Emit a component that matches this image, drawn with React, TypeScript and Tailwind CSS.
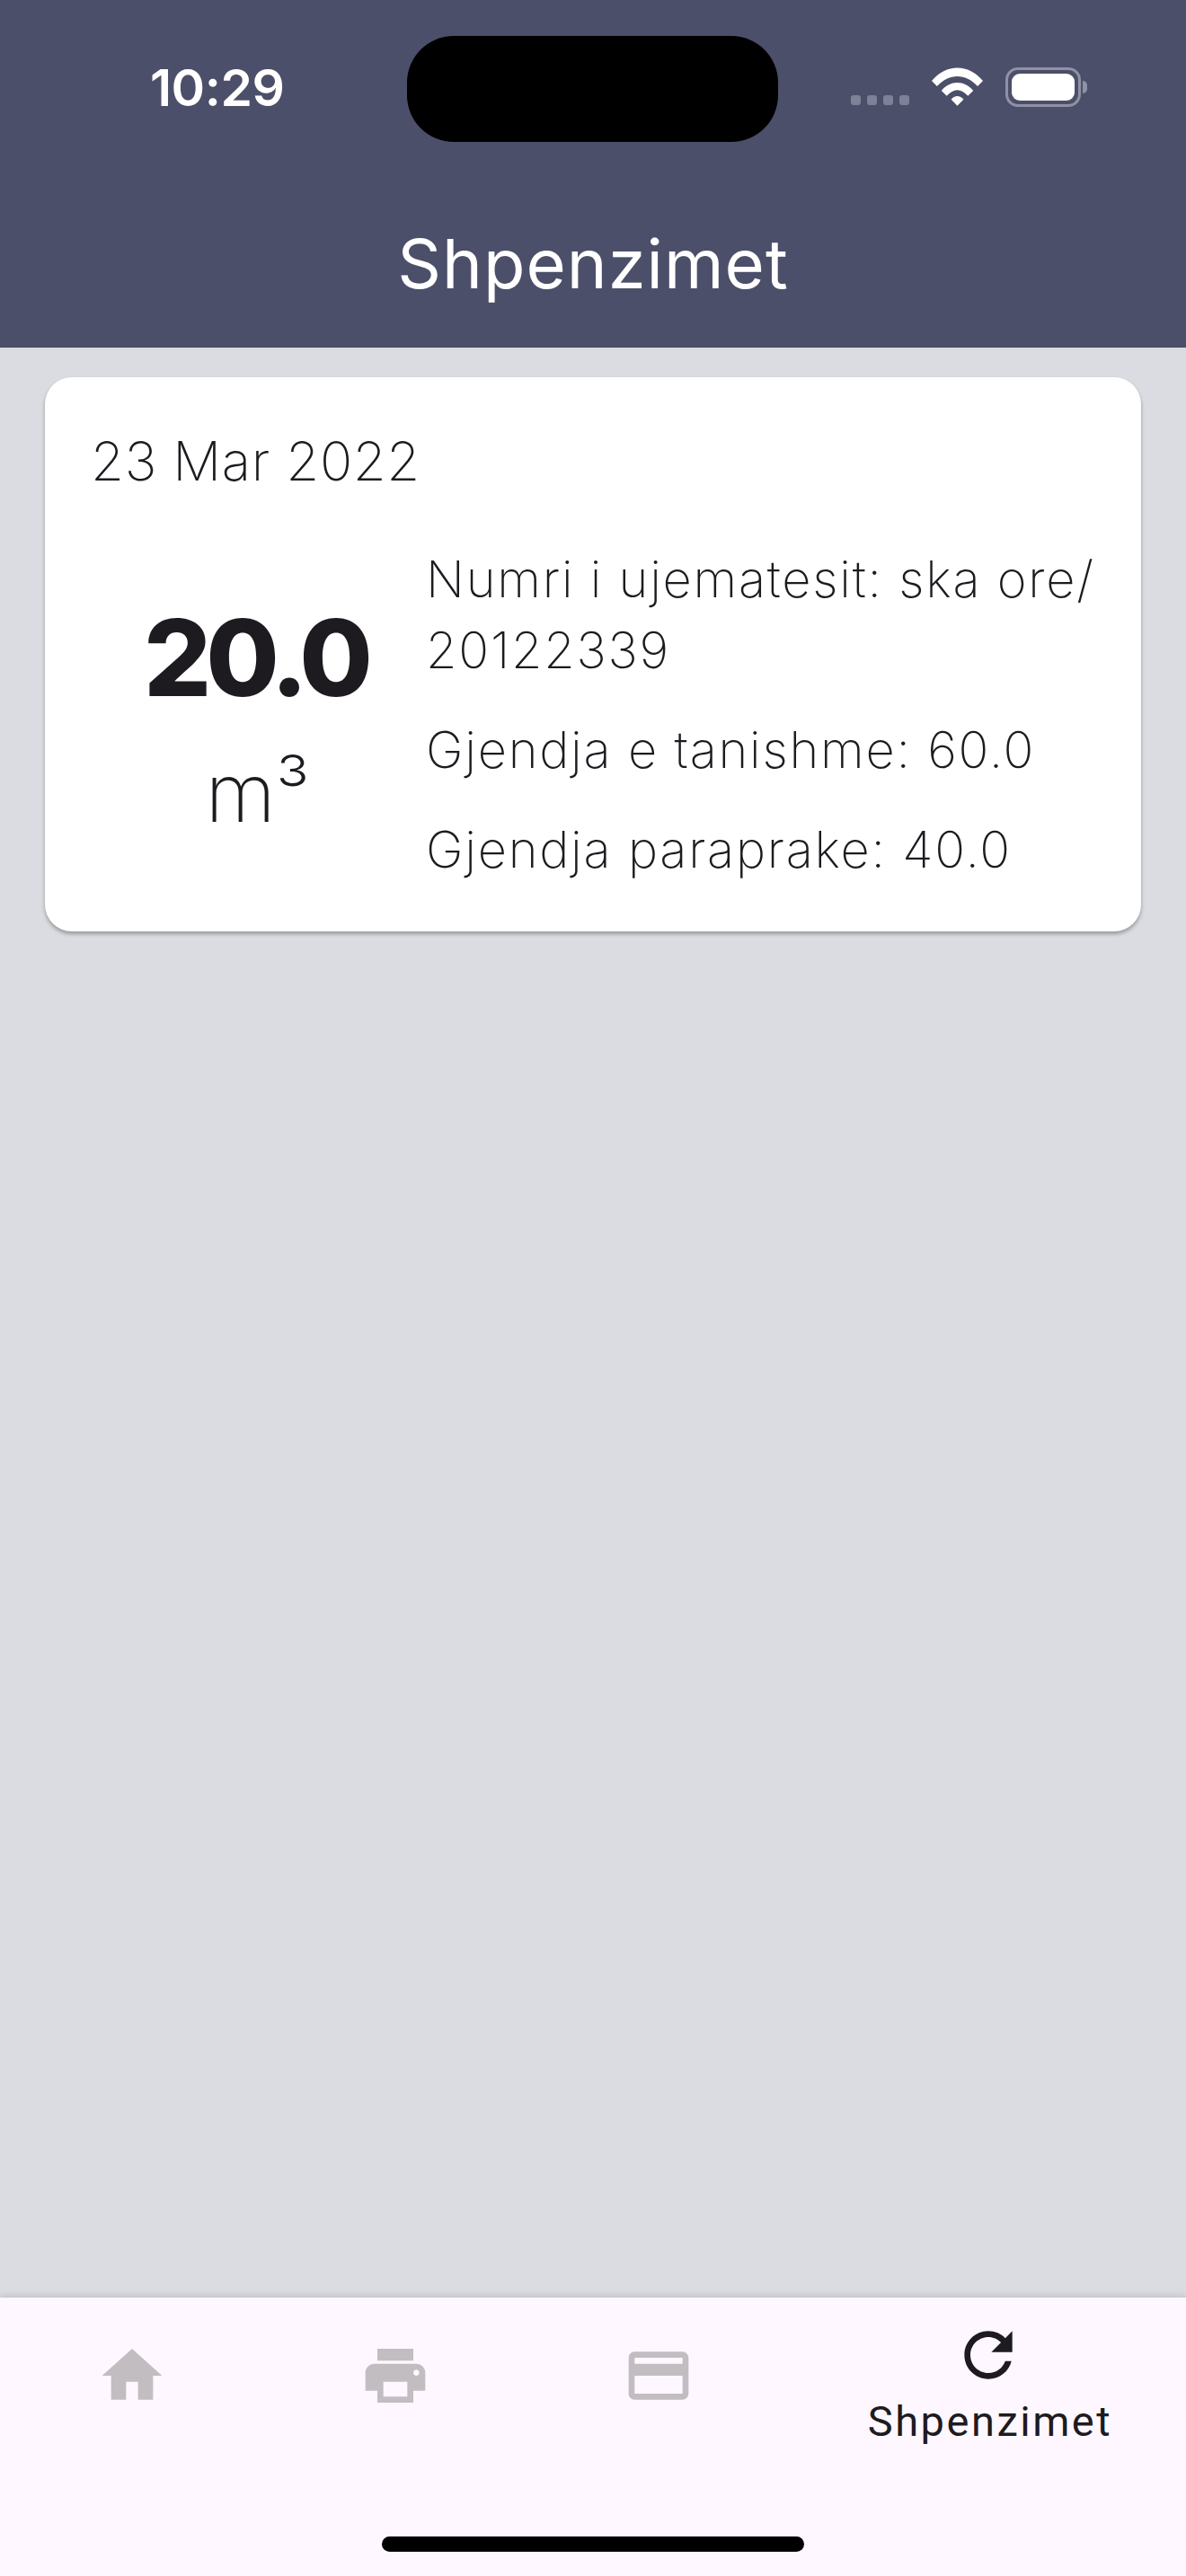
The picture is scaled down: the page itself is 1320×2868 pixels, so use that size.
const poppins = "font-['Inter',sans-serif]";

function NavIcon({ d, active }: { d: string; active?: boolean }) {
    return (
        <svg
            viewBox="0 0 24 24"
            className={active ? "h-20 w-20 fill-[#1d1b20]" : "h-20 w-20 fill-[#c2bdc1]"}
        >
            <path d={d} />
        </svg>
    );
}

function StatusBar() {
    return (
        <div className="flex h-[158px] items-start pt-10">
            <div className="flex h-[118px] w-[453px] items-center pb-1 pl-[167px] font-['Inter',sans-serif] text-[57px] leading-none font-semibold tracking-[-0.5px] text-white">
                10:29
            </div>
            <div className="h-[118px] w-[413px] rounded-[52px] bg-black" />
            <div className="flex h-[118px] flex-1 items-center gap-[25px] pb-1 pl-[81px]">
                <div className="mt-[28px] flex gap-[7px]">
                    <span className="h-[11px] w-[11px] rounded-[3px] bg-[#7f8198]" />
                    <span className="h-[11px] w-[11px] rounded-[3px] bg-[#7f8198]" />
                    <span className="h-[11px] w-[11px] rounded-[3px] bg-[#7f8198]" />
                    <span className="h-[11px] w-[11px] rounded-[3px] bg-[#7f8198]" />
                </div>
                <svg viewBox="0 0 58 44" className="h-[44px] w-[57px] fill-white">
                    <path d="M0 15 C16 -5 42 -5 58 15 L52 21 C38 6 20 6 6 21 Z" />
                    <path d="M11 26 C21 14 37 14 47 26 L41 32 C33 23 25 23 17 32 Z" />
                    <path d="M22 36 C26 31 32 31 36 36 L29 43 Z" />
                </svg>
                <div className="flex items-center gap-[2px]">
                    <div className="flex h-[44px] w-[84px] items-center justify-center rounded-[14px] border-[3px] border-[#8f91a6]">
                        <div className="h-[30px] w-[70px] rounded-[9px] bg-white" />
                    </div>
                    <div className="h-[14px] w-[5px] rounded-r-full bg-[#8f91a6]" />
                </div>
            </div>
        </div>
    );
}

function ExpenseCard() {
    return (
        <div className="rounded-[30px] bg-white pt-[58px] pr-[40px] pb-[51px] pl-[51px] text-[#1d1b20] shadow-[0_3px_4px_rgba(0,0,0,0.3)]">
            <div className={`${poppins} text-[60px] leading-[70px] font-extralight tracking-[0.6px]`}>
                23 Mar 2022
            </div>
            <div className="mt-[58px] flex">
                <div className="flex w-[373px] flex-col items-center pt-[51px] pr-[6px]">
                    <div className="font-['Inter',sans-serif] text-[118px] leading-[150px] font-extrabold tracking-[-6px]">
                        20.0
                    </div>
                    <div className={`${poppins} mt-[26px] ml-1 text-[90px] leading-[100px] font-extralight`}>
                        m³
                    </div>
                </div>
                <div className={`${poppins} flex flex-1 flex-col gap-8 text-[56px] leading-[79px] font-extralight tracking-[1.75px] whitespace-nowrap`}>
                    <div>
                        Numri i ujematesit: ska ore/
                        <br />
                        20122339
                    </div>
                    <div>Gjendja e tanishme: 60.0</div>
                    <div>Gjendja paraprake: 40.0</div>
                </div>
            </div>
        </div>
    );
}

export default function App() {
    return (
        <div className="flex h-[2868px] w-[1320px] flex-col overflow-hidden bg-[#dbdce1]">
            <header className="h-[387px] bg-[#4c4f69]">
                <StatusBar />
                <h1 className={`${poppins} mt-[85px] text-center text-[76px] leading-[100px] font-normal tracking-[1px] text-white`}>
                    Shpenzimet
                </h1>
            </header>

            <main className="flex-1 px-[50px] pt-[33px]">
                <ExpenseCard />
            </main>

            <nav className="relative h-[310px] bg-[#fef7ff] shadow-[0_-3px_6px_rgba(0,0,0,0.1)]">
                <div className="grid grid-cols-[2fr_2fr_2fr_3fr]">
                    <div className="flex justify-center pt-[47px]">
                        <NavIcon d="M10 20v-6h4v6h5v-8h3L12 3 2 12h3v8z" />
                    </div>
                    <div className="flex justify-center pt-[47px]">
                        <NavIcon d="M19 8H5c-1.66 0-3 1.34-3 3v6h4v4h12v-4h4v-6c0-1.66-1.34-3-3-3zm-3 11H8v-5h8v5zm3-7c-.55 0-1-.45-1-1s.45-1 1-1 1 .45 1 1-.45 1-1 1zm-1-9H6v4h12V3z" />
                    </div>
                    <div className="flex justify-center pt-[47px]">
                        <NavIcon d="M20 4H4c-1.11 0-1.99.89-1.99 2L2 18c0 1.11.89 2 2 2h16c1.11 0 2-.89 2-2V6c0-1.11-.89-2-2-2zm0 14H4v-6h16v6zm0-10H4V6h16v2z" />
                    </div>
                    <div className="flex flex-col items-center pt-6">
                        <NavIcon active d="M17.65 6.35C16.2 4.9 14.21 4 12 4c-4.42 0-7.99 3.58-7.99 8s3.57 8 7.99 8c3.73 0 6.84-2.55 7.73-6h-2.08c-.82 2.33-3.04 4-5.65 4-3.31 0-6-2.69-6-6s2.69-6 6-6c1.66 0 3.14.69 4.22 1.78L13 11h7V4l-2.35 2.35z" />
                        <span className="mt-[6px] ml-1 font-['Roboto',sans-serif] text-[47px] leading-[56px] tracking-[2.5px] text-[#1d1b20]">
                            Shpenzimet
                        </span>
                    </div>
                </div>
                <div className="absolute bottom-[27px] left-[425px] h-[17px] w-[470px] rounded-full bg-black" />
            </nav>
        </div>
    );
}
